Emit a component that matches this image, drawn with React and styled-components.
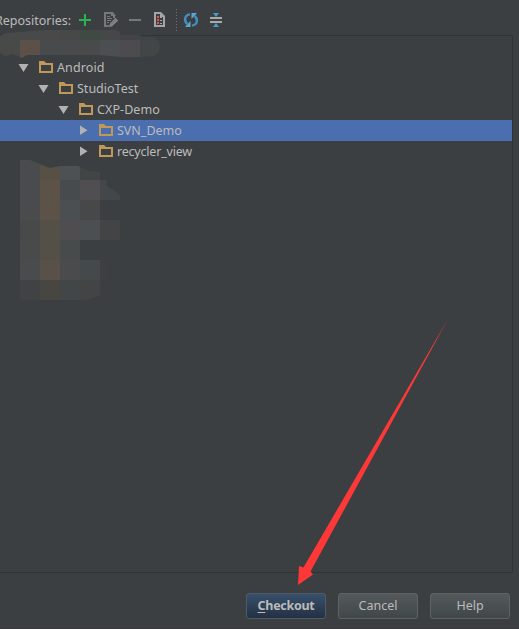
import React from "react";
import styled, { createGlobalStyle, css } from "styled-components";

const GlobalStyle = createGlobalStyle`
  body { margin: 0; background: #3c3f41; overflow: hidden; }
  * { box-sizing: border-box; }
`;

const Dialog = styled.main`
  position: relative;
  display: flex;
  flex-direction: column;
  width: 519px;
  height: 629px;
  background: #3c3f41;
  border-bottom: 1px solid #37393b;
  color: #bbbbbb;
  font: 12.5px/21px "Noto Sans", "Open Sans", sans-serif;
  overflow: hidden;
`;

const Toolbar = styled.header`
  display: flex;
  align-items: center;
  height: 35px;
  padding-top: 5px;
  flex: none;
`;

const ToolbarLabel = styled.span`
  width: 76px;
  margin-left: -5px;
  margin-right: 6px;
  white-space: nowrap;
`;

const ToolIcon = styled.svg`
  display: block;
  flex: none;
  width: 16px;
  height: 16px;
  margin-right: ${(p) => p.$gap || 0}px;
`;

const Separator = styled.div`
  width: 1px;
  height: 23px;
  margin: 0 6px 0 7px;
  background: repeating-linear-gradient(#727476 0 1px, transparent 1px 3px);
`;

const TreePanel = styled.section`
  width: 513px;
  height: 538px;
  flex: none;
  padding-top: 21px;
  border: 1px solid #313335;
  border-left: 0;
`;

const TreeRow = styled.div`
  display: flex;
  align-items: center;
  height: 21px;
  padding-left: ${(p) => 18 + p.$level * 20}px;
  background: ${(p) => (p.$selected ? "#4b6eaf" : "transparent")};
`;

const Chevron = styled.svg`
  width: 12px;
  height: 21px;
  margin-right: 9px;
`;

const Folder = styled.svg`
  width: 14px;
  height: 21px;
  margin-right: 4px;
`;

const RowLabel = styled.span`
  letter-spacing: ${(p) => p.$spacing}px;
  white-space: nowrap;
`;

const Actions = styled.footer`
  display: flex;
  gap: 12px;
  padding: 20px 0 0 246px;
`;

const Button = styled.button`
  width: 80px;
  height: 26px;
  padding: 0 0 1px;
  border: 1px solid #5e6263;
  border-radius: 3px;
  background: linear-gradient(#545a5c, #414648);
  color: #bbbbbb;
  font: inherit;
  line-height: 22px;
  ${(p) =>
    p.$primary &&
    css`
      background: linear-gradient(#384f6b, #233143);
      border-color: #4f5a68;
      font-weight: 700;
      letter-spacing: -0.3px;
    `}
`;

const Mnemonic = styled.span`
  text-decoration: underline;
  text-underline-offset: 2px;
`;

const Overlay = styled.svg`
  position: absolute;
  inset: 0;
  pointer-events: none;
`;

const nodes = [
  { name: "Android", level: 0, open: true, spacing: 0.12 },
  { name: "StudioTest", level: 1, open: true, spacing: 0 },
  { name: "CXP-Demo", level: 2, open: true, spacing: 0.08 },
  { name: "SVN_Demo", level: 3, open: false, selected: true, spacing: 0 },
  { name: "recycler_view", level: 3, open: false, spacing: -0.2 },
];

const upperPatches = [
  ["#474a49", "#47494a", "#494949", "#464948", "#404a44", "#464748", "#424445", "#414445"],
  ["#484a48", "#5c5148", "#484b4e", "#484a4b", "#484b4a", "#4c4f52", "#4c4b4d", "#434646"],
];

const lowerPatches = [
  ["#4a4b4c", "#575045", "#4d5153", "#424545", "#3c3f41"],
  ["#4a4b4c", "#5c5247", "#474b4d", "#504e50", "#43474a"],
  ["#4a4b4c", "#5c5247", "#4b4f52", "#464948", "#3c3f41"],
  ["#484a49", "#555047", "#4f4d4f", "#4b4f52", "#424544"],
  ["#484b49", "#545047", "#484b4b", "#3b3f41", "#3c3f41"],
  ["#4a4b4c", "#595147", "#4a4b4d", "#44494c", "#3e3f41"],
  ["#414243", "#474640", "#424646", "#434444", "#3c3f41"],
];

function Patches({ rows, x, y }) {
  return rows.map((row, r) =>
    row.map((fill, c) => (
      <rect key={`${c}-${r}`} x={x + c * 20} y={y + r * 20} width="20" height="20" fill={fill} />
    ))
  );
}

function FolderIcon() {
  return (
    <Folder viewBox="0 0 14 21">
      <path fill="#c29859" fillRule="evenodd" d="M0 4h5l2 2h7v10H0zM2 8v6h10V8z" />
    </Folder>
  );
}

function TreeArrow({ open }) {
  return (
    <Chevron viewBox="0 0 12 21">
      <path fill="#b2b2b2" d={open ? "M.5 7h10L5.5 15z" : "M2 5.5v9.5l7.5-4.75z"} />
    </Chevron>
  );
}

function EditIcon() {
  return (
    <ToolIcon viewBox="0 0 16 16" $gap={8}>
      <path fill="none" stroke="#777879" strokeWidth="2" d="M9 14H2V1h7l2 3v2" />
      <path fill="#777879" d="M8 0h2l3 4H8z" />
      <path stroke="#777879" d="M4 4.5h3M4 6.5h5M4 8.5h4M4 10.5h2" />
      <path fill="#858687" stroke="#3c3f41" strokeWidth=".5" d="M12.3 5.5L15.5 8.5l-6.5 6L5.6 15.5l1-3.8z" />
      <path stroke="#606264" strokeWidth=".7" d="M8 12.5l5-5" />
    </ToolIcon>
  );
}

function ReportIcon() {
  return (
    <ToolIcon viewBox="0 0 16 16" $gap={0}>
      <path fill="#a5a5a5" fillRule="evenodd" d="M1 0h7l4 4v11H1zM3 2v11h7V5H7V2z" />
      <path fill="#d85a50" d="M4 4h2v2H4zM4 7h2v2H4zM4 10h2v2H4z" />
      <path fill="#a5a5a5" d="M7 5h2v1H7zM7 8h2v1H7zM7 11h2v1H7z" />
    </ToolIcon>
  );
}

function RefreshIcon() {
  return (
    <ToolIcon viewBox="0 0 16 16" $gap={9}>
      <path
        fill="none"
        stroke="#438fbe"
        strokeWidth="2.4"
        d="M7 2.4C1.2 3.2.8 9 4.4 12M9 13.6C14.8 12.8 15.2 7 11.6 4"
      />
      <path fill="#58a8d7" d="M8.5 1H14L8.5 7zM7.5 15H2l5.5-6z" />
    </ToolIcon>
  );
}

export default function App() {
  return (
    <>
      <GlobalStyle />
      <Dialog>
        <Toolbar>
          <ToolbarLabel>Repositories:</ToolbarLabel>
          <ToolIcon viewBox="0 0 16 16" $gap={10}>
            <path fill="#28b54b" d="M7 2h2v5h5v2H9v5H7V9H2V7h5z" />
          </ToolIcon>
          <EditIcon />
          <ToolIcon viewBox="0 0 16 16" $gap={10}>
            <path fill="#777879" d="M2 7h12v2H2z" />
          </ToolIcon>
          <ReportIcon />
          <Separator />
          <RefreshIcon />
          <ToolIcon viewBox="0 0 16 16">
            <path fill="#a9a9a9" d="M2 5h12v2H2zM2 9h12v2H2z" />
            <path fill="#489bcc" d="M5 1h6L8 5zM8 11l3 4H5z" />
          </ToolIcon>
        </Toolbar>
        <TreePanel>
          {nodes.map((n) => (
            <TreeRow key={n.name} $level={n.level} $selected={n.selected}>
              <TreeArrow open={n.open} />
              <FolderIcon />
              <RowLabel $spacing={n.spacing}>{n.name}</RowLabel>
            </TreeRow>
          ))}
        </TreePanel>
        <Actions>
          <Button $primary>
            <Mnemonic>C</Mnemonic>heckout
          </Button>
          <Button>Cancel</Button>
          <Button>Help</Button>
        </Actions>
        <Overlay width="519" height="629" viewBox="0 0 519 629">
          <defs>
            <clipPath id="upper-smudge">
              <path d="M0 36L6 33 20 32 32 31 45 30H115L120 32V35H140L142 37H154Q160 39 160 47Q159 54 154 56L140 57H122L100 55H27L22 58 16 55 12 54 6 56 0 53z" />
            </clipPath>
            <clipPath id="lower-smudge">
              <path d="M20 160h10l12 5 8 3 10-2h18l11 5 11 1v8h7l-1 5 14 10v5h-20v20h20v20h-20v20h8l-1 9 1 11-8 2v14l-15 4-3 7H56v-3H42l-22-5z" />
            </clipPath>
          </defs>
          <g clipPath="url(#upper-smudge)">
            <Patches rows={upperPatches} x={0} y={20} />
          </g>
          <g clipPath="url(#lower-smudge)">
            <Patches rows={lowerPatches} x={20} y={160} />
          </g>
          <path fill="#ff3837" d="M448 319L310.5 571.5l2.5 3-15 10.5 1-19 4.5 1.5z" />
        </Overlay>
      </Dialog>
    </>
  );
}
